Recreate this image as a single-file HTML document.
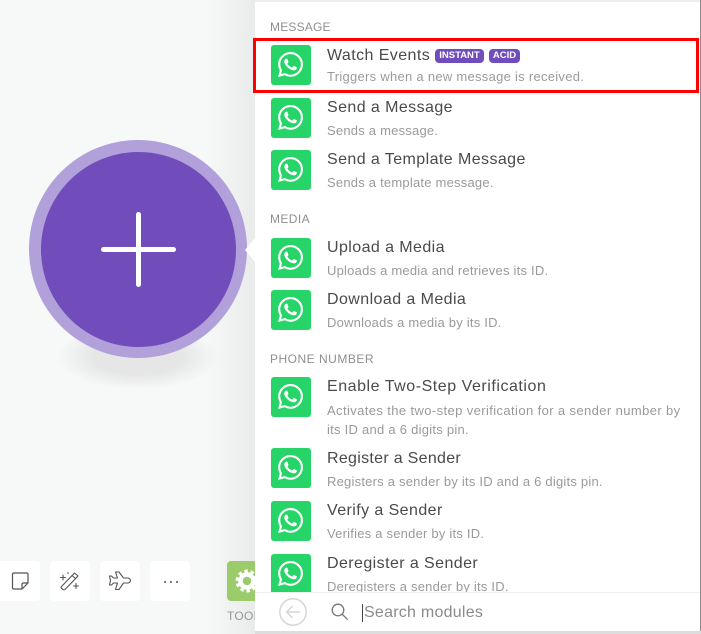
<!DOCTYPE html>
<html><head><meta charset="utf-8">
<style>
html,body{margin:0;padding:0}
body{width:701px;height:634px;overflow:hidden;position:relative;background:#f7f8f8;font-family:"Liberation Sans",sans-serif}
.a{position:absolute;white-space:nowrap}
.t{left:327px;font-size:16px;line-height:20px;color:#4a4a4a;letter-spacing:.42px}
.d{left:327px;font-size:13px;line-height:18px;color:#9a9a9a;letter-spacing:.22px}
.h{left:270px;font-size:12px;line-height:16px;color:#8f8f8f;letter-spacing:.4px}
.i{position:absolute;left:271px;width:40px;height:40px;border-radius:3px;background:#27d468;overflow:hidden}
.i svg{position:absolute;left:7px;top:7px;width:25px;height:25px;fill:#fff}
.b{position:absolute;top:561px;width:40px;height:40px;background:#fff;border-radius:4px}
.tag{position:absolute;top:48.5px;height:14px;background:#714dbb;border-radius:4px;color:#fff;font-size:9.5px;font-weight:bold;line-height:14px;text-align:center}
</style></head><body>
<svg width="0" height="0" style="position:absolute"><defs><symbol id="w" viewBox="0 0 24 24"><path d="M17.472 14.382c-.297-.149-1.758-.867-2.03-.967-.273-.099-.471-.148-.67.15-.197.297-.767.966-.94 1.164-.173.199-.347.223-.644.075-.297-.15-1.255-.463-2.39-1.475-.883-.788-1.48-1.761-1.653-2.059-.173-.297-.018-.458.13-.606.134-.133.298-.347.446-.52.149-.174.198-.298.298-.497.099-.198.05-.371-.025-.52-.075-.149-.669-1.612-.916-2.207-.242-.579-.487-.5-.669-.51-.173-.008-.371-.01-.57-.01-.198 0-.52.074-.792.372-.272.297-1.04 1.016-1.04 2.479 0 1.462 1.065 2.875 1.213 3.074.149.198 2.096 3.2 5.077 4.487.709.306 1.262.489 1.694.625.712.227 1.36.195 1.871.118.571-.085 1.758-.719 2.006-1.413.248-.694.248-1.289.173-1.413-.074-.124-.272-.198-.57-.347m-5.421 7.403h-.004a9.87 9.87 0 01-5.031-1.378l-.361-.214-3.741.982.998-3.648-.235-.374a9.86 9.86 0 01-1.51-5.26c.001-5.45 4.436-9.884 9.888-9.884 2.64 0 5.122 1.03 6.988 2.898a9.825 9.825 0 012.893 6.994c-.003 5.45-4.437 9.884-9.885 9.884m8.413-18.297A11.815 11.815 0 0012.05 0C5.495 0 .16 5.335.157 11.892c0 2.096.547 4.142 1.588 5.945L.057 24l6.305-1.654a11.882 11.882 0 005.683 1.448h.005c6.554 0 11.89-5.335 11.893-11.893a11.821 11.821 0 00-3.48-8.413z"/></symbol></defs></svg>

<!-- canvas -->
<div class="a" style="left:205px;top:0;width:50px;height:634px;background:linear-gradient(to right,rgba(0,0,0,0),rgba(0,0,0,.055))"></div>
<div class="a" style="left:58px;top:325px;width:160px;height:64px;border-radius:50%;background:radial-gradient(ellipse at center,rgba(0,0,0,.07) 40%,rgba(0,0,0,0) 72%)"></div>
<div class="a" style="left:29px;top:140px;width:218px;height:218px;border-radius:50%;background:#b1a0d9"></div>
<div class="a" style="left:40.5px;top:151.5px;width:195px;height:195px;border-radius:50%;background:#714dbb"></div>
<div class="a" style="left:101px;top:246.5px;width:75px;height:5px;border-radius:3px;background:#fff"></div>
<div class="a" style="left:136px;top:212px;width:5px;height:75px;border-radius:3px;background:#fff"></div>
<div class="a" style="left:245px;top:238px;width:0;height:0;border-top:12px solid transparent;border-bottom:12px solid transparent;border-right:10px solid #fff"></div>

<!-- toolbar -->
<div class="b" style="left:0;border-radius:0 4px 4px 0">
<svg width="40" height="40" fill="none" stroke="#555" stroke-width="1.2" stroke-linejoin="round"><path d="M12.500 13.500q0-1.500 1.500-1.500h12.500q1.500 0 1.500 1.500v8.500l-6 6h-8q-1.500 0-1.500-1.500z"/><path d="M28 22h-4.500q-1.500 0-1.500 1.500v4.500"/></svg></div>
<div class="b" style="left:50px">
<svg width="40" height="40" fill="none" stroke="#555" stroke-width="1.100" stroke-linecap="round" stroke-linejoin="round"><path d="M11.500 25.500l13-13.500 3.500 3-13 13.500q-1 .8-2 0l-1.500-1.300q-.8-1 0-1.700z"/><path d="M22 14.500l3.500 3"/><path d="M13 14v5M10.500 16.500h5M26 22.500v5M23.500 25h5M18 11.500v1"/></svg></div>
<div class="b" style="left:100px">
<svg width="40" height="40" fill="none" stroke="#555" stroke-width="1.100" stroke-linejoin="round"><path d="M15.500 11h3.500l4.500 6h4.500q2.500.8 2.500 2.500t-2.500 2.500h-4.500l-4.500 6.500h-3.500l2-6.500h-4l-2 2h-2l1-4.500-1-4.500h2l2 2h4z"/></svg></div>
<div class="b" style="left:150px">
<div class="a" style="left:13.500px;top:19.500px;width:2px;height:2px;border-radius:50%;background:#555"></div>
<div class="a" style="left:19.500px;top:19.500px;width:2px;height:2px;border-radius:50%;background:#555"></div>
<div class="a" style="left:25.500px;top:19.500px;width:2px;height:2px;border-radius:50%;background:#555"></div></div>
<div class="a" style="left:227px;top:561px;width:40px;height:40px;background:#9ccb6b;border-radius:4px"></div>
<svg class="a" style="left:235px;top:569px" width="24" height="24" viewBox="0 0 24 24"><circle cx="12" cy="12" r="6.500" fill="none" stroke="#fff" stroke-width="4.500"/><circle cx="12" cy="12" r="10" fill="none" stroke="#fff" stroke-width="3" stroke-dasharray="3.500 2.800"/></svg>
<div class="a" style="left:227px;top:608px;font-size:12px;line-height:16px;color:#999;letter-spacing:.3px">TOOLS</div>

<!-- panel -->
<div class="a" style="left:255px;top:2px;width:445px;height:629px;background:#fff;overflow:hidden"></div>
<div class="a" style="left:255px;top:0;width:445px;height:2px;background:#eee"></div>
<div class="a" style="left:700px;top:0;width:1px;height:634px;background:#8c8c8c"></div>
<div class="a" style="left:255px;top:631px;width:446px;height:3px;background:#ddd"></div>

<div class="a h" style="top:19px;letter-spacing:.2px">MESSAGE</div>
<div class="i" style="top:45px"><svg><use href="#w"/></svg></div>
<div class="a t" style="top:46px">Watch Events</div>
<div class="tag" style="left:435px;width:49px">INSTANT</div>
<div class="tag" style="left:489px;width:31px">ACID</div>
<div class="a d" style="top:68px;letter-spacing:.28px">Triggers when a new message is received.</div>

<div class="i" style="top:98px"><svg><use href="#w"/></svg></div>
<div class="a t" style="top:98px">Send a Message</div>
<div class="a d" style="top:122px">Sends a message.</div>

<div class="i" style="top:150px"><svg><use href="#w"/></svg></div>
<div class="a t" style="top:150px">Send a Template Message</div>
<div class="a d" style="top:174px">Sends a template message.</div>

<div class="a h" style="top:210.500px">MEDIA</div>
<div class="i" style="top:238px"><svg><use href="#w"/></svg></div>
<div class="a t" style="top:238px">Upload a Media</div>
<div class="a d" style="top:262px">Uploads a media and retrieves its ID.</div>

<div class="i" style="top:290px"><svg><use href="#w"/></svg></div>
<div class="a t" style="top:290px">Download a Media</div>
<div class="a d" style="top:314px">Downloads a media by its ID.</div>

<div class="a h" style="top:350.500px;letter-spacing:.5px">PHONE NUMBER</div>
<div class="i" style="top:377px"><svg><use href="#w"/></svg></div>
<div class="a t" style="top:377px;letter-spacing:.54px">Enable Two-Step Verification</div>
<div class="a d" style="top:402px;letter-spacing:.39px">Activates the two-step verification for a sender number by</div>
<div class="a d" style="top:421px;letter-spacing:.26px">its ID and a 6 digits pin.</div>

<div class="i" style="top:448px"><svg><use href="#w"/></svg></div>
<div class="a t" style="top:449px;letter-spacing:.3px">Register a Sender</div>
<div class="a d" style="top:473px">Registers a sender by its ID and a 6 digits pin.</div>

<div class="i" style="top:501px"><svg><use href="#w"/></svg></div>
<div class="a t" style="top:501px">Verify a Sender</div>
<div class="a d" style="top:525px">Verifies a sender by its ID.</div>

<div class="i" style="top:554px"><svg><use href="#w"/></svg></div>
<div class="a t" style="top:554px">Deregister a Sender</div>
<div class="a d" style="top:578px">Deregisters a sender by its ID.</div>

<!-- search bar -->
<div class="a" style="left:255px;top:592px;width:445px;height:39px;background:#fff;border-top:1px solid #eee;box-sizing:border-box"></div>
<svg class="a" style="left:278px;top:597px" width="30" height="30" fill="none" stroke="#d6d6d6" stroke-width="1.500" stroke-linecap="round" stroke-linejoin="round"><circle cx="15" cy="15" r="13.200"/><path d="M8.500 15h13M14 9.500l-5.500 5.500 5.500 5.500"/></svg>
<svg class="a" style="left:330px;top:602px" width="20" height="20" fill="none" stroke="#777" stroke-width="1.300" stroke-linecap="round"><circle cx="8" cy="8" r="5.800"/><path d="M12.500 12.500l4.800 4.800"/></svg>
<div class="a" style="left:362px;top:604px;width:1px;height:18px;background:#444"></div>
<div class="a" style="left:364px;top:603px;font-size:16px;line-height:20px;color:#8a8a8a;letter-spacing:.25px">Search modules</div>

<!-- red highlight -->
<div class="a" style="left:253px;top:38px;width:446px;height:55px;box-sizing:border-box;border:3px solid #f00"></div>
</body></html>
